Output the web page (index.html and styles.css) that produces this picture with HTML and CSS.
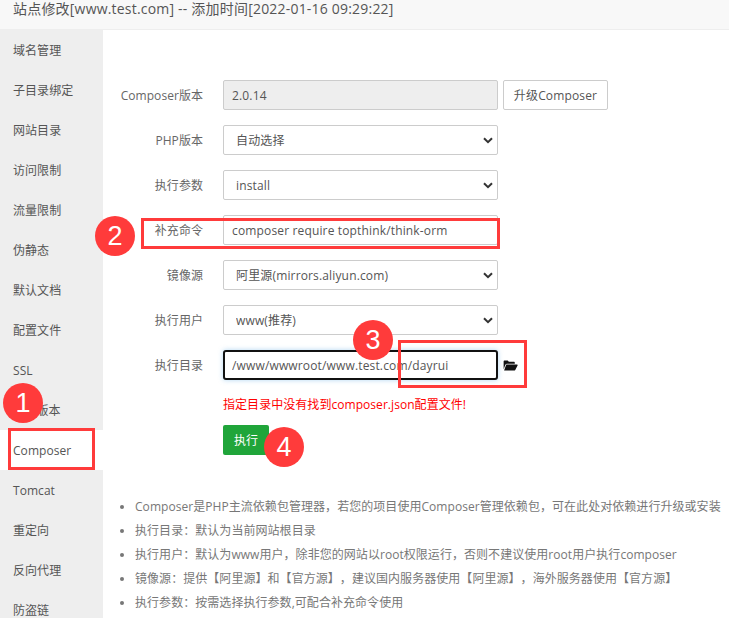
FILE: index.html
```html
<!DOCTYPE html>
<html lang="zh-CN">
<head>
    <meta charset="UTF-8">
    <title>站点修改</title>
    <link rel="stylesheet" href="styles.css">
</head>
<body>
    <div class="page">
        <div class="title">站点修改[www.test.com] -- 添加时间[2022-01-16 09:29:22]</div>
        <div class="main">
            <ul class="side">
                <li>域名管理</li>
                <li>子目录绑定</li>
                <li>网站目录</li>
                <li>访问限制</li>
                <li>流量限制</li>
                <li>伪静态</li>
                <li>默认文档</li>
                <li>配置文件</li>
                <li>SSL</li>
                <li>PHP版本</li>
                <li class="active">Composer</li>
                <li>Tomcat</li>
                <li>重定向</li>
                <li>反向代理</li>
                <li>防盗链</li>
            </ul>
            <div class="content">
                <div class="row">
                    <label class="row-label">Composer版本</label>
                    <input class="field field-off" type="text" value="2.0.14" readonly>
                    <button class="btn-plain">升级Composer</button>
                </div>
                <div class="row">
                    <label class="row-label">PHP版本</label>
                    <div class="select-wrap">
                        <select class="field field-select"><option>自动选择</option></select>
                        <svg class="chevron" viewBox="0 0 10 7"><path d="M1 1.2 5 5.2 9 1.2" fill="none" stroke="#333" stroke-width="2"/></svg>
                    </div>
                </div>
                <div class="row">
                    <label class="row-label">执行参数</label>
                    <div class="select-wrap">
                        <select class="field field-select"><option>install</option></select>
                        <svg class="chevron" viewBox="0 0 10 7"><path d="M1 1.2 5 5.2 9 1.2" fill="none" stroke="#333" stroke-width="2"/></svg>
                    </div>
                </div>
                <div class="row">
                    <label class="row-label">补充命令</label>
                    <input class="field" type="text" value="composer require topthink/think-orm">
                </div>
                <div class="row">
                    <label class="row-label">镜像源</label>
                    <div class="select-wrap">
                        <select class="field field-select"><option>阿里源(mirrors.aliyun.com)</option></select>
                        <svg class="chevron" viewBox="0 0 10 7"><path d="M1 1.2 5 5.2 9 1.2" fill="none" stroke="#333" stroke-width="2"/></svg>
                    </div>
                </div>
                <div class="row">
                    <label class="row-label">执行用户</label>
                    <div class="select-wrap">
                        <select class="field field-select"><option>www(推荐)</option></select>
                        <svg class="chevron" viewBox="0 0 10 7"><path d="M1 1.2 5 5.2 9 1.2" fill="none" stroke="#333" stroke-width="2"/></svg>
                    </div>
                </div>
                <div class="row">
                    <label class="row-label">执行目录</label>
                    <input class="field field-focus" type="text" value="/www/wwwroot/www.test.com/dayrui">
                    <svg class="folder" viewBox="0 0 16 12">
                        <path d="M0.5 10V1.6C0.5 1 1 0.5 1.6 0.5H5L6.2 2H11.6C12.2 2 12.7 2.5 12.7 3.1V4H4.2C3.4 4 2.8 4.4 2.4 5.1Z" fill="#111"/>
                        <path d="M3.4 5H15.2C15.7 5 16 5.5 15.7 6L13.2 10.8C12.9 11.3 12.5 11.5 12 11.5H1L3.4 5Z" fill="#111"/>
                    </svg>
                </div>
                <p class="error">指定目录中没有找到composer.json配置文件!</p>
                <button class="btn-run">执行</button>
                <ul class="help">
                    <li>Composer是PHP主流依赖包管理器，若您的项目使用Composer管理依赖包，可在此处对依赖进行升级或安装</li>
                    <li>执行目录：默认为当前网站根目录</li>
                    <li>执行用户：默认为www用户，除非您的网站以root权限运行，否则不建议使用root用户执行composer</li>
                    <li>镜像源：提供【阿里源】和【官方源】，建议国内服务器使用【阿里源】，海外服务器使用【官方源】</li>
                    <li>执行参数：按需选择执行参数,可配合补充命令使用</li>
                </ul>
            </div>
        </div>

        <!-- red marks drawn over the screenshot -->
        <div class="mark-box mark-box-1"></div>
        <div class="mark-box mark-box-2"></div>
        <div class="mark-box mark-box-3"></div>
        <div class="mark-num mark-num-1">1</div>
        <div class="mark-num mark-num-2">2</div>
        <div class="mark-num mark-num-3">3</div>
        <div class="mark-num mark-num-4">4</div>
    </div>
</body>
</html>
```

FILE: styles.css
```css
* {
    box-sizing: border-box;
}
html, body {
    margin: 0;
    padding: 0;
}
body {
    font-family: "Open Sans", "Noto Sans CJK SC", sans-serif;
    font-size: 12px;
    letter-spacing: 0.05px;
    color: #555;
    background: #fff;
    text-spacing-trim: space-all;
}
.page {
    position: relative;
    width: 729px;
    height: 618px;
    overflow: hidden;
}
.title {
    height: 30px;
    padding: 0 13px;
    font-size: 14px;
    line-height: 18px;
    letter-spacing: 0.2px;
    white-space: nowrap;
    background: #f8f8f8;
    border-bottom: 1px solid #eee;
}
.main {
    display: flex;
}
.side {
    flex: 0 0 103px;
    margin: 0;
    padding: 0;
    list-style: none;
    background: #eee;
}
.side li {
    height: 40px;
    padding-left: 13px;
    line-height: 41px;
    color: #555;
}
.side li.active {
    background: #fff;
}
.content {
    flex: 1;
    min-width: 0;
    padding: 50px 0 0 17px;
}
.row {
    display: flex;
    align-items: center;
    height: 30px;
    margin-bottom: 15px;
}
.row-label {
    width: 83px;
    margin-right: 20px;
    text-align: right;
    white-space: nowrap;
    color: #666;
}
.field {
    display: block;
    width: 275px;
    height: 30px;
    padding: 0 8px;
    font: inherit;
    letter-spacing: 0.15px;
    color: #555;
    background: #fff;
    border: 1px solid #ccc;
    border-radius: 2px;
    outline: none;
}
.field-off {
    background: #eee;
}
.field-select {
    padding-left: 12px;
    appearance: none;
}
.field-focus {
    border: 2px solid #111;
    border-radius: 3px;
    padding-left: 7px;
    box-shadow: 0 0 5px rgba(102, 175, 233, 0.5);
}
.select-wrap {
    position: relative;
    width: 275px;
}
.chevron {
    position: absolute;
    right: 5px;
    top: 12px;
    width: 10px;
    height: 7px;
}
.folder {
    width: 15px;
    height: 11px;
    margin-left: 5px;
}
.btn-plain {
    width: 105px;
    height: 30px;
    margin-left: 5px;
    padding: 0;
    font: inherit;
    letter-spacing: 0.15px;
    color: #555;
    background: #fff;
    border: 1px solid #ccc;
    border-radius: 2px;
}
.error {
    margin: -1px 0 0 103px;
    height: 22px;
    line-height: 22px;
    white-space: nowrap;
    color: #f00;
}
.btn-run {
    display: block;
    width: 46px;
    height: 30px;
    margin: 9px 0 0 103px;
    padding: 0;
    font: inherit;
    color: #fff;
    background: #20a53a;
    border: 0;
    border-radius: 2px;
}
.help {
    margin: 40px 0 0;
    padding: 0 0 0 15px;
    color: #777;
}
.help li {
    height: 24px;
    line-height: 24px;
    white-space: nowrap;
}
.help li::marker {
    color: #777;
}
.mark-box {
    position: absolute;
    border: 3px solid #ff3b3b;
}
.mark-box-1 {
    left: 8px;
    top: 428px;
    width: 87px;
    height: 42px;
}
.mark-box-2 {
    left: 141px;
    top: 218px;
    width: 359px;
    height: 31px;
}
.mark-box-3 {
    left: 398px;
    top: 340px;
    width: 129px;
    height: 48px;
}
.mark-num {
    position: absolute;
    width: 40px;
    height: 40px;
    font-family: "Liberation Sans", sans-serif;
    font-size: 27px;
    line-height: 40px;
    text-align: center;
    color: #fff;
    background: #ff3b3b;
    border-radius: 50%;
}
.mark-num-1 {
    left: 3px;
    top: 383px;
}
.mark-num-2 {
    left: 95px;
    top: 216px;
}
.mark-num-3 {
    left: 353px;
    top: 320px;
}
.mark-num-4 {
    left: 264px;
    top: 427px;
}
```
